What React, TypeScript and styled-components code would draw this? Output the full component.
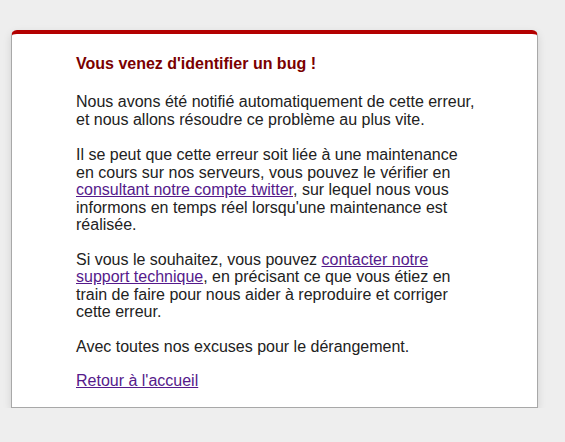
import React from 'react';
import styled, { createGlobalStyle } from 'styled-components';

const GlobalStyle = createGlobalStyle`
  html, body {
    margin: 0;
    background: #eeeeee;
    font-family: "Liberation Sans", Arial, sans-serif;
  }
`;

export default function App() {
  return (
    <>
      <GlobalStyle />
      <Page>
        <Card>
          <Content>
            <Title>Vous venez d'identifier un bug !</Title>
            <Text>
              Nous avons été notifié automatiquement de cette erreur, et nous allons résoudre ce
              problème au plus vite.
            </Text>
            <Text>
              Il se peut que cette erreur soit liée à une maintenance en cours sur nos serveurs,
              vous pouvez le vérifier en <Link href="#">consultant notre compte twitter</Link>, sur
              lequel nous vous informons en temps réel lorsqu'une maintenance est réalisée.
            </Text>
            <Text>
              Si vous le souhaitez, vous pouvez <Link href="#">contacter notre support technique</Link>,
              en précisant ce que vous étiez en train de faire pour nous aider à reproduire et
              corriger cette erreur.
            </Text>
            <Text>Avec toutes nos excuses pour le dérangement.</Text>
            <Text>
              <Link href="#">Retour à l'accueil</Link>
            </Text>
          </Content>
        </Card>
      </Page>
    </>
  );
}

const Page = styled.div`
  padding: 30px 0 0 11px;
`;

const Card = styled.div`
  width: 527px;
  box-sizing: border-box;
  background: #ffffff;
  border: 1px solid #a8a8a8;
  border-top: 4px solid #b30000;
  border-radius: 6px 6px 0 0;
  box-shadow: 0 3px 8px rgba(0, 0, 0, 0.12);
`;

const Content = styled.div`
  width: 400px;
  padding: 21px 0 0 64px;
  overflow: hidden;
`;

const Title = styled.h1`
  margin: 0 0 20px;
  font-size: 16px;
  font-weight: 700;
  line-height: 18px;
  color: #7a0000;
`;

const Text = styled.p`
  margin: 0 0 17px;
  font-size: 16px;
  line-height: 17.5px;
  color: #222222;

  &:first-of-type {
    margin-bottom: 18px;
  }
`;

const Link = styled.a`
  color: #551a8b;
  text-decoration: underline;
`;
